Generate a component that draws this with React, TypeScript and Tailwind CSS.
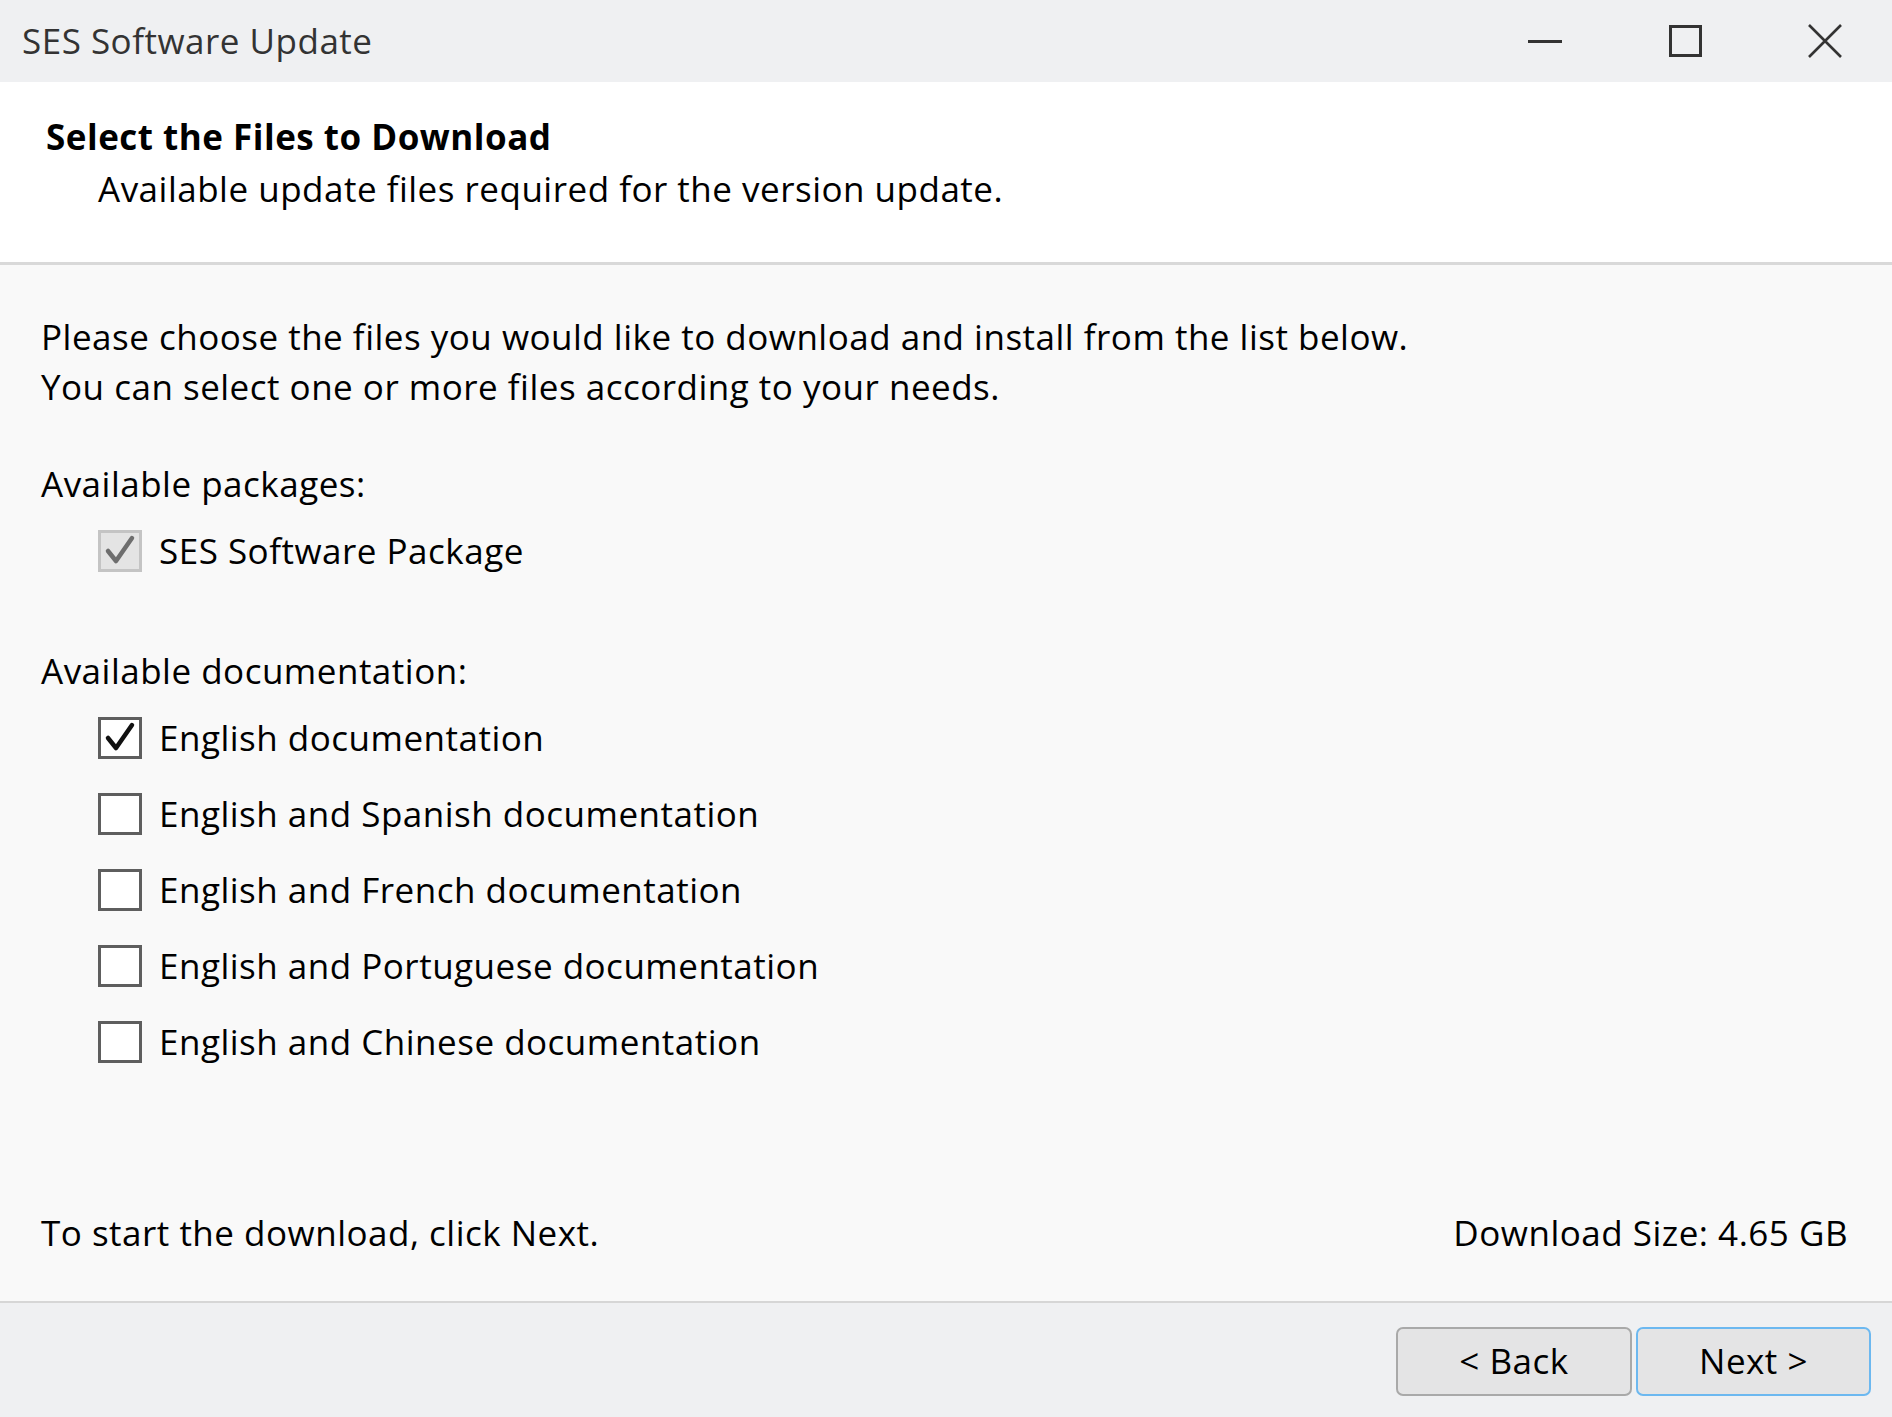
import React from "react";

const FONT = "font-['Open_Sans',_'Noto_Sans',_sans-serif]";

function CheckBox({ checked, disabled }: { checked?: boolean; disabled?: boolean }) {
  const box = disabled
    ? "border-[#c4c4c4] bg-[#e4e4e4]"
    : "border-[#5e5e5e] bg-white";
  return (
    <div className={`w-[44px] h-[42px] border-[3px] ${box} flex items-center justify-center shrink-0`}>
      {checked && (
        <svg viewBox="0 0 38 36" className="w-[38px] h-[36px]">
          <path
            d="M7 18 L15 28 L31 5"
            fill="none"
            stroke={disabled ? "#6e6e6e" : "#111111"}
            strokeWidth="4.5"
            strokeLinecap="round"
            strokeLinejoin="round"
          />
        </svg>
      )}
    </div>
  );
}

function Row({ label, checked, disabled }: { label: string; checked?: boolean; disabled?: boolean }) {
  return (
    <div className="h-[76px] flex items-center pl-[57px] gap-[17px]">
      <CheckBox checked={checked} disabled={disabled} />
      <span className="leading-[50px]">{label}</span>
    </div>
  );
}

export default function App() {
  return (
    <div className={`w-[1892px] h-[1417px] flex flex-col text-[35px] tracking-[0.5px] text-black ${FONT} overflow-hidden`}>
      {/* Title bar */}
      <div className="h-[82px] bg-[#eff0f2] flex items-center shrink-0">
        <div className="pl-[22px] text-[#333333] flex-1">SES Software Update</div>
        <div className="flex h-full">
          <div className="w-[140px] h-full flex items-center justify-center pl-[6px]">
            <div className="w-[34px] h-[3px] bg-[#333]" />
          </div>
          <div className="w-[140px] h-full flex items-center justify-center pl-[6px]">
            <div className="w-[33px] h-[32px] border-[3px] border-[#333]" />
          </div>
          <div className="w-[140px] h-full flex items-center justify-center pl-[6px]">
            <svg viewBox="0 0 36 34" className="w-[36px] h-[34px]">
              <path d="M2 1 L34 33 M34 1 L2 33" stroke="#333" strokeWidth="2.6" fill="none" />
            </svg>
          </div>
        </div>
      </div>

      {/* Header */}
      <div className="bg-white pt-[29px] pb-[47px] shrink-0">
        <div className="pl-[46px] font-bold leading-[52px]">Select the Files to Download</div>
        <div className="pl-[98px] leading-[52px]">Available update files required for the version update.</div>
      </div>
      <div className="h-[3px] bg-[#d9d9d9] shrink-0" />

      {/* Body */}
      <div className="flex-1 bg-[#f9f9f9] flex flex-col pl-[41px] pr-[44px] pt-[47px] pb-[43px]">
        <div className="leading-[50px]">
          Please choose the files you would like to download and install from the list below.
        </div>
        <div className="leading-[50px]">You can select one or more files according to your needs.</div>

        <div className="leading-[50px] mt-[47px]">Available packages:</div>
        <div className="mt-[4px]">
          <Row label="SES Software Package" checked disabled />
        </div>

        <div className="leading-[50px] mt-[57px]">Available documentation:</div>
        <div className="mt-[4px] flex flex-col">
          <Row label="English documentation" checked />
          <Row label="English and Spanish documentation" />
          <Row label="English and French documentation" />
          <Row label="English and Portuguese documentation" />
          <Row label="English and Chinese documentation" />
        </div>

        <div className="mt-auto flex justify-between leading-[50px]">
          <span>To start the download, click Next.</span>
          <span>Download Size: 4.65 GB</span>
        </div>
      </div>

      {/* Footer */}
      <div className="h-[2px] bg-[#d6d6d6] shrink-0" />
      <div className="h-[114px] bg-[#eff0f2] shrink-0 flex justify-end pt-[24px] pr-[21px] gap-[4px]">
        <button className="w-[236px] h-[69px] rounded-[7px] border-2 border-[#a9a9a9] bg-[#e4e4e5] flex items-center justify-center text-black">
          &lt; Back
        </button>
        <button className="w-[235px] h-[69px] rounded-[7px] border-2 border-[#6cb8f0] bg-[#e4e4e5] flex items-center justify-center text-black">
          Next &gt;
        </button>
      </div>
    </div>
  );
}
